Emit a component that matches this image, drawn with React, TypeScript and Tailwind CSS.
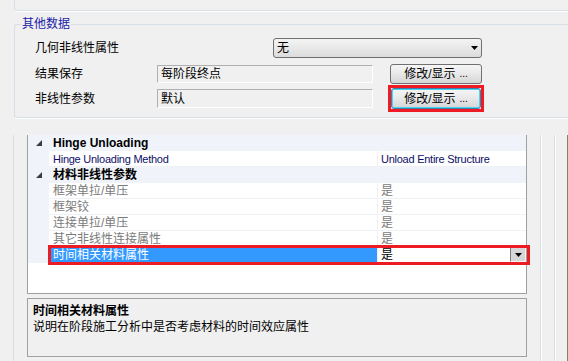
import React from 'react';

const FONT = "font-['Liberation_Sans','Noto_Sans_CJK_SC',sans-serif]";

const ArrowDown: React.FC<{ className?: string }> = ({ className }) => (
  <svg width="7" height="4" viewBox="0 0 7 4" className={className}>
    <polygon points="0,0 7,0 3.5,4" fill="#000" />
  </svg>
);

const Expander: React.FC = () => (
  <svg width="6" height="6" viewBox="0 0 6 6" className="ml-[8px]">
    <polygon points="6,0 6,6 0,6" fill="#3c3c3c" />
  </svg>
);

const WinButton: React.FC<{ focused?: boolean; className?: string }> = ({ focused, className }) => (
  <button
    className={
      'flex items-center justify-center rounded-[3px] border bg-gradient-to-b from-[#f6f6f6] via-[#e8e8e8] to-[#d6d6d6] text-[12px] leading-none text-black ' +
      (focused
        ? 'border-[#3c7fb1] shadow-[inset_0_0_0_1px_#48d5f0] '
        : 'border-[#707070] ') +
      (className ?? '')
    }
  >
    修改/显示 <span className="ml-[4px] text-[10px]">...</span>
  </button>
);

type Row =
  | { kind: 'cat'; label: string; latin?: boolean }
  | { kind: 'item'; label: string; value: string; dim?: boolean; selected?: boolean; latin?: boolean };

const rows: Row[] = [
  { kind: 'cat', label: 'Hinge Unloading', latin: true },
  { kind: 'item', label: 'Hinge Unloading Method', value: 'Unload Entire Structure', latin: true },
  { kind: 'cat', label: '材料非线性参数' },
  { kind: 'item', label: '框架单拉/单压', value: '是', dim: true },
  { kind: 'item', label: '框架铰', value: '是', dim: true },
  { kind: 'item', label: '连接单拉/单压', value: '是', dim: true },
  { kind: 'item', label: '其它非线性连接属性', value: '是', dim: true },
  { kind: 'item', label: '时间相关材料属性', value: '是', selected: true },
];

export default function App() {
  return (
    <div className={`w-[568px] h-[361px] overflow-hidden bg-[#f0f0f0] flex flex-col text-[12px] leading-[16px] text-black ${FONT}`}>
      {/* previous group box (bottom edge only) */}
      <div className="ml-[14px] h-[11px] shrink-0 border-l border-b border-[#d5dfe5] rounded-bl-[3px] shadow-[0_1px_0_#fff]" />

      {/* 其他数据 */}
      <fieldset className="mt-[5px] ml-[14px] shrink-0 border border-r-0 border-[#d5dfe5] rounded-l-[3px] pb-[5px] shadow-[0_1px_0_#fff]">
        <legend className="ml-[6px] px-[1px] text-[#1c1ca8] leading-[16px]">其他数据</legend>

        <div className="mt-[6px] h-[20px] flex items-center">
          <div className="w-[258px] pl-[20px]">几何非线性属性</div>
          <div className="w-[209px] h-[20px] flex items-center justify-between rounded-[3px] border border-[#707070] bg-gradient-to-b from-[#f4f4f4] to-[#dcdcdc] pl-[3px] pr-[3px]">
            <span>无</span>
            <ArrowDown />
          </div>
        </div>

        <div className="mt-[6px] h-[20px] flex items-center">
          <div className="w-[142px] pl-[20px]">结果保存</div>
          <div className="w-[216px] h-[18px] flex items-center border border-[#b0b0b0] border-r-white border-b-white pl-[3px]">每阶段终点</div>
          <WinButton className="ml-[17px] w-[92px] h-[20px]" />
        </div>

        <div className="mt-[1px] h-[27px] flex items-center">
          <div className="w-[142px] pl-[20px]">非线性参数</div>
          <div className="w-[216px] h-[19px] flex items-center border border-[#b0b0b0] border-r-white border-b-white pl-[3px]">默认</div>
          <div className="ml-[15px] w-[96px] h-[27px] border-[3px] border-[#ed1c24] flex">
            <WinButton focused className="w-[90px] h-[21px]" />
          </div>
        </div>
      </fieldset>

      {/* lower pane */}
      <div className="mt-[17px] ml-[13px] flex-1 flex border-l border-[#d5dfe5]">
        <div className="ml-[13px] w-[500px] flex flex-col">
          {/* property grid */}
          <div className="relative h-[159px] bg-white border-x border-b border-[#a0a0a0]">
            {rows.map((r, i) =>
              r.kind === 'cat' ? (
                <div key={i} className="h-[16px] flex items-center bg-[#f0f4fa]">
                  <div className="w-[21px] flex items-center"><Expander /></div>
                  <div className="pl-[4px] font-bold">{r.label}</div>
                </div>
              ) : (
                <div key={i} className={'h-[16px] flex ' + (r.latin ? 'text-[11px] tracking-[-0.25px]' : '')}>
                  <div className="w-[21px] bg-[#f0f4fa]" />
                  <div
                    className={
                      'w-[328px] pl-[4px] flex items-center border-b ' +
                      (r.selected
                        ? 'bg-[#3399ff] text-white border-[#3399ff]'
                        : 'border-[#eef1f6] ' + (r.dim ? 'text-[#7a7a7a]' : 'text-[#0e0e66]'))
                    }
                  >
                    {r.label}
                  </div>
                  <div
                    className={
                      'flex-1 flex items-center justify-between pl-[3px] border-l border-b border-[#eef1f6] ' +
                      (r.selected ? 'text-black' : r.dim ? 'text-[#7a7a7a]' : 'text-[#0e0e66]')
                    }
                  >
                    <span>{r.value}</span>
                    {r.selected && (
                      <div className="w-[16px] h-[15px] flex items-center justify-center bg-[#d6d6d6] border border-[#808080] border-r-[#f4f4f4] border-b-[#f4f4f4]">
                        <ArrowDown />
                      </div>
                    )}
                  </div>
                </div>
              )
            )}
            {/* highlight around the selected row */}
            <div className="absolute left-[20px] top-[110px] w-[482px] h-[20px] border-[3px] border-[#ed1c24] pointer-events-none" />
          </div>

          {/* description */}
          <div className="mt-[4px] h-[59px] border border-[#a0a0a0] px-[5px] pt-[4px]">
            <div className="font-bold">时间相关材料属性</div>
            <div>说明在阶段施工分析中是否考虑材料的时间效应属性</div>
          </div>
        </div>

        {/* splitter edges on the right */}
        <div className="ml-[13px] w-[1px] bg-[#d5dfe5] shadow-[1px_0_0_#fff]" />
        <div className="ml-[13px] w-[1px] bg-[#d5dfe5] shadow-[1px_0_0_#fff]" />
        <div className="ml-[12px] w-[1px] bg-[#8b7d6b]" />
      </div>
    </div>
  );
}
